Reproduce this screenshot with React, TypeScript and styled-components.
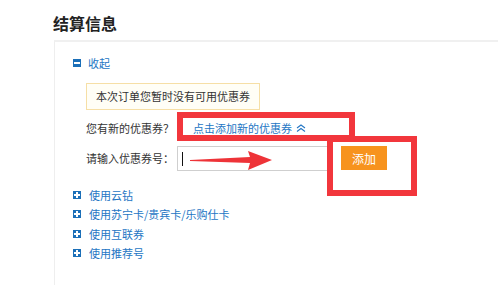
import * as React from 'react';
import styled, { createGlobalStyle } from 'styled-components';

const GlobalStyle = createGlobalStyle`
  body {
    margin: 0;
    background: #fff;
    font-family: "Noto Sans CJK SC", "Noto Sans", sans-serif;
    color: #333;
  }
`;

const Page = styled.div`
  position: relative;
  width: 498px;
  height: 285px;
  overflow: hidden;
  background: #fff;
`;

const Title = styled.h2`
  margin: 0 0 9px;
  padding: 15px 0 0 53px;
  font-size: 16px;
  line-height: 16px;
  font-weight: bold;
  color: #222;
`;

const Panel = styled.div`
  margin-left: 54px;
  height: 245px;
  border-top: 2px solid #f0f0f0;
  border-left: 1px solid #eeeeee;
  padding-top: 13px;
  box-sizing: border-box;
`;

const Toggle = styled.div`
  display: flex;
  align-items: center;
  gap: 7px;
  height: 16px;
  padding-left: 18px;
  font-size: 11px;
  color: #2476c4;
`;

const SquareIcon = styled.span`
  position: relative;
  display: inline-block;
  width: 8px;
  height: 8px;
  background: #1b6fb8;
  &::before {
    content: '';
    position: absolute;
    left: 1px;
    right: 1px;
    top: 3px;
    height: 2px;
    background: #fff;
  }
  &::after {
    content: '';
    position: absolute;
    top: 1px;
    bottom: 1px;
    left: 3px;
    width: 2px;
    background: #fff;
    display: ${props => (props['data-open'] ? 'none' : 'block')};
  }
`;

const Coupon = styled.div`
  padding-left: 31px;
  font-size: 11px;
`;

const Notice = styled.div`
  display: inline-block;
  margin-top: 12px;
  padding: 0 9px;
  height: 25px;
  line-height: 25px;
  border: 1px solid #f6dfa6;
  background: #fffef6;
  color: #333;
`;

const Row = styled.div`
  display: flex;
  align-items: ${props => (props['data-top'] ? 'flex-start' : 'center')};
  height: 25px;
  margin-top: ${props => props['data-gap'] || 0}px;
`;

const Label = styled.span`
  width: 91px;
  flex-shrink: 0;
  color: #333;
`;

const AddLink = styled.a`
  display: flex;
  align-items: center;
  gap: 4px;
  padding-left: 16px;
  color: #2476c4;
  text-decoration: none;
`;

const CodeInput = styled.div`
  display: flex;
  align-items: center;
  width: 152px;
  height: 25px;
  box-sizing: border-box;
  padding-left: 4px;
  border: 1px solid #cfcfcf;
  background: #fff;
`;

const Caret = styled.span`
  width: 1px;
  height: 14px;
  background: #111;
`;

const AddButton = styled.button`
  margin-left: 12px;
  width: 46px;
  height: 24px;
  border: none;
  padding: 0;
  background: #f7931e;
  color: #fff;
  font-family: inherit;
  font-size: 12px;
`;

const Options = styled.ul`
  list-style: none;
  margin: 14px 0 0;
  padding: 0 0 0 18px;
`;

const Option = styled.li`
  display: flex;
  align-items: center;
  gap: 8px;
  height: 19.5px;
  font-size: 11px;
  color: #2476c4;
`;

const Mark = styled.div`
  position: absolute;
  box-sizing: border-box;
  border: 6px solid #f2363c;
`;

const Arrow = styled.svg`
  position: absolute;
  left: 188px;
  top: 150px;
`;

const options = ['使用云钻', '使用苏宁卡/贵宾卡/乐购仕卡', '使用互联券', '使用推荐号'];

const App = () => (
  <Page>
    <GlobalStyle />
    <Title>结算信息</Title>
    <Panel>
      <Toggle>
        <SquareIcon data-open />
        <span>收起</span>
      </Toggle>
      <Coupon>
        <Notice>本次订单您暂时没有可用优惠券</Notice>
        <Row data-gap={5}>
          <Label>您有新的优惠券？</Label>
          <AddLink>
            点击添加新的优惠券
            <svg width="10" height="8" viewBox="0 0 10 8">
              <path d="M1 4 L5 1 L9 4 M1 7.5 L5 4.5 L9 7.5" fill="none" stroke="#2476c4" strokeWidth="1.1" />
            </svg>
          </AddLink>
        </Row>
        <Row data-gap={6} data-top>
          <Label style={{ lineHeight: '25px' }}>请输入优惠券号：</Label>
          <CodeInput>
            <Caret />
          </CodeInput>
          <AddButton>添加</AddButton>
        </Row>
      </Coupon>
      <Options>
        {options.map(o => (
          <Option key={o}>
            <SquareIcon />
            <span>{o}</span>
          </Option>
        ))}
      </Options>
    </Panel>
    <Mark style={{ left: 177, top: 112, width: 178, height: 29 }} />
    <Mark style={{ left: 327, top: 136, width: 90, height: 60 }} />
    <Arrow width="86" height="22" viewBox="0 0 86 22">
      <polygon points="2,10 62,7 60,1 84,10 60,20 62,13 2,11" fill="#ee3338" />
    </Arrow>
  </Page>
);

export default App;
